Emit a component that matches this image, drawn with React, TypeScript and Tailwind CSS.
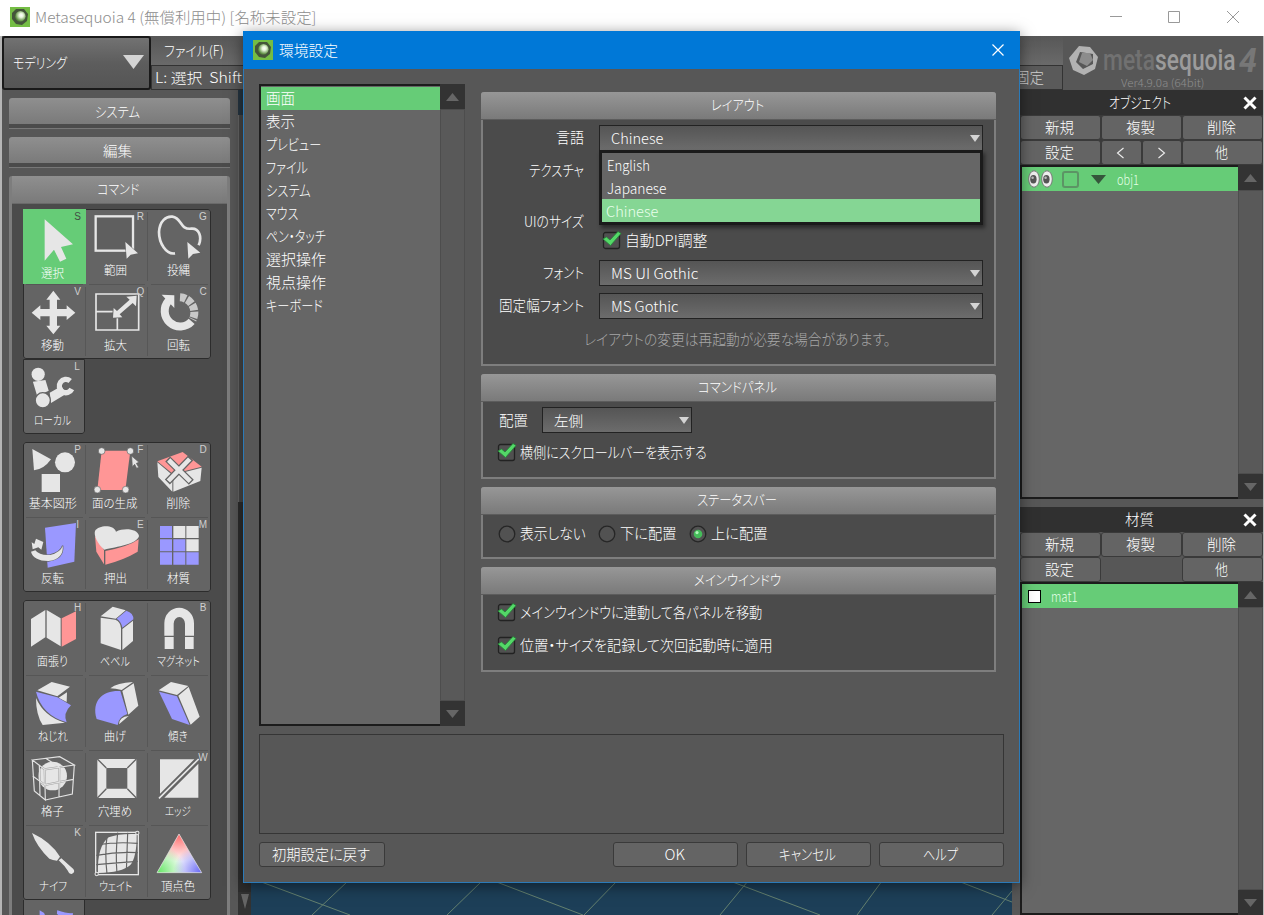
import React, { useLayoutEffect, useRef, useState } from 'react';

const L = '#e6e6e6';
const P = '#ff9696';
const V = '#9a98ff';

/** Text squeezed or stretched horizontally to a fixed advance width. */
function Fit({ w, children, className = '' }: { w: number; children: React.ReactNode; className?: string }) {
  const ref = useRef<HTMLSpanElement>(null);
  const [scale, setScale] = useState(1);
  useLayoutEffect(() => {
    if (ref.current) setScale(w / ref.current.offsetWidth);
  }, [w]);
  return (
    <span className={`inline-block shrink-0 whitespace-nowrap text-left ${className}`} style={{ width: w }}>
      <span ref={ref} className="inline-block origin-left whitespace-pre" style={{ transform: `scaleX(${scale})` }}>
        {children}
      </span>
    </span>
  );
}

function AppIcon() {
  return (
    <svg className="h-5 w-5 shrink-0" viewBox="0 0 20 20">
      <defs>
        <radialGradient id="glow" cx=".58" cy=".42" r=".55">
          <stop offset="0" stopColor="#fff" />
          <stop offset=".35" stopColor="#e8f6dc" />
          <stop offset="1" stopColor="#5d8f40" />
        </radialGradient>
      </defs>
      <rect width="20" height="20" fill="#74bd44" />
      <path d="M6 2 L14 2 L18 7 L17 14 L12 18 L6 17 L2 12 L2 6Z" fill="#44553a" />
      <circle cx="10.4" cy="9.2" r="5.2" fill="url(#glow)" />
    </svg>
  );
}

function Tri({ up = false, className = '' }: { up?: boolean; className?: string }) {
  return (
    <svg className={className} viewBox="0 0 12 8" preserveAspectRatio="none">
      <path d={up ? 'M6 0 L12 8 H0Z' : 'M0 0 H12 L6 8Z'} fill="currentColor" />
    </svg>
  );
}

function ScrollBar() {
  return (
    <div className="flex w-[25px] shrink-0 flex-col bg-[#595959]">
      <div className="flex h-[25px] items-center justify-center bg-[#333]">
        <Tri up className="h-[8px] w-[13px] text-[#666]" />
      </div>
      <div className="grow border border-[#4d4d4d] bg-[#595959]" />
      <div className="flex h-[25px] items-center justify-center bg-[#333]">
        <Tri className="h-[8px] w-[13px] text-[#666]" />
      </div>
    </div>
  );
}

type Tool = { label: string; w: number; k?: string; vb: string; icon: React.ReactNode; on?: boolean };

function ToolCell({ t, col, first }: { t: Tool; col: number; first: boolean }) {
  return (
    <div className={`relative h-[75px] ${t.on ? 'bg-[#66cc77]' : ''}`}>
      {!first && <div className="absolute left-[3px] right-[3px] top-0 h-px bg-[#565656]" />}
      {col < 2 && !t.on && <div className="absolute bottom-[3px] right-0 top-[3px] w-px bg-[#575757]" />}
      <svg className="absolute inset-0 h-full w-full" viewBox={t.vb} preserveAspectRatio="none">
        {t.icon}
      </svg>
      {t.k && (
        <span className={`absolute right-[3px] top-[2px] w-[10px] text-center font-['Liberation_Sans'] text-[10px] leading-[12px] ${t.on ? 'rounded-sm text-[#424b44]' : 'text-[#cfcfcf]'}`}>
          {t.k}
        </span>
      )}
      <div className={`absolute left-0 right-[3px] flex h-[14px] items-center justify-center text-[12px] leading-[14px] text-white ${t.on ? 'top-[57px]' : 'top-[54px]'}`}>
        <Fit w={t.w}>{t.label}</Fit>
      </div>
    </div>
  );
}

function ToolGroup({ tools, className = '' }: { tools: Tool[]; className?: string }) {
  return (
    <div className={`grid w-[188px] shrink-0 grid-cols-3 rounded-[3px] bg-[#646464] outline outline-1 -outline-offset-1 outline-[#2c2c2c] ${className}`}>
      {tools.map((t, i) => (
        <ToolCell key={t.label} t={t} col={i % 3} first={i < 3} />
      ))}
    </div>
  );
}

const G1: Tool[] = [
  { label: '選択', w: 23, k: 'S', vb: '69 27 188 225', on: true, icon: <path fill={L} d="M134 58 V182 L162 149 L180 185 L199 176 L183 141 L219 133Z" /> },
  {
    label: '範囲', w: 23, k: 'R', vb: '257 27 188 225',
    icon: (
      <>
        <rect x="286" y="49" width="112" height="103" fill="#5f5f5f" stroke={L} strokeWidth="7" />
        <path d="M375 126 L379 176 L391 164 L413 160Z" fill={L} stroke="#646464" strokeWidth="3" paintOrder="stroke" />
      </>
    ),
  },
  {
    label: '投縄', w: 23, k: 'G', vb: '445 27 188 225',
    icon: (
      <>
        <path d="M526 160 C500 165 478 130 478 96 C480 62 500 48 518 50 C548 54 540 90 575 86 C598 84 608 110 597 136" fill="none" stroke={L} strokeWidth="8" />
        <path d="M563 126 L566 176 L580 162 L602 158Z" fill={L} stroke="#646464" strokeWidth="3" paintOrder="stroke" />
      </>
    ),
  },
  {
    label: '移動', w: 23, k: 'V', vb: '69 252 188 225',
    icon: <path fill={L} d="M160 272 L181 299 H171 V327 H200 V316 L226 338 L200 360 V349 H171 V377 H181 L160 403 L139 377 H149 V349 H121 V360 L95 338 L121 316 V327 H149 V299 H139Z" />,
  },
  {
    label: '拡大', w: 23, k: 'Q', vb: '257 252 188 225',
    icon: (
      <>
        <path d="M287 282 H415 V390 H287Z M287 335 H351 V390" fill="none" stroke={L} strokeWidth="5" />
        <path d="M409 287 L407 319 L397 309 L358 343 L366 352 L338 353 L340 324 L350 333 L388 299 L378 290Z" fill={L} stroke="#646464" strokeWidth="5" paintOrder="stroke" />
      </>
    ),
  },
  {
    label: '回転', w: 23, k: 'C', vb: '445 252 188 225',
    icon: (
      <>
        <path d="M507 302 A46 46 0 1 0 576 364" fill="none" stroke={L} strokeWidth="24" />
        <path d="M486 284 L524 286 L524 324Z" fill={L} />
        <path d="M541 292 A46 46 0 0 1 579 359" fill="none" stroke="#c8c8c8" strokeWidth="24" strokeDasharray="18 4" />
      </>
    ),
  },
];

const LOCAL: Tool = {
  label: 'ローカル', w: 37, k: 'L', vb: '69 477 188 225',
  icon: (
    <>
      <path d="M99 545 L137 540 L147 572 L112 588Z M150 578 L186 558 L198 583 L154 609Z" fill={L} />
      <circle cx="115" cy="523" r="20" fill={L} />
      <circle cx="129" cy="601" r="23" fill={L} stroke="#646464" strokeWidth="4" />
      <path d="M212 543 A20 20 0 1 0 217 567" fill="none" stroke={L} strokeWidth="16" />
    </>
  ),
};

const G2: Tool[] = [
  { label: '基本図形', w: 48, k: 'P', vb: '69 21 188 225', icon: <g fill={L}><path d="M97 42 L153 73 Q132 103 102 106Z" /><circle cx="195" cy="82" r="30" /><path d="M125 117 H180 V171 H125Z" /></g> },
  {
    label: '面の生成', w: 46, k: 'F', vb: '257 21 188 225',
    icon: (
      <>
        <path d="M304 47 H390 L375 165 H291Z" fill={P} />
        <g fill={L} stroke="#646464" strokeWidth="2">
          <circle cx="304" cy="48" r="10" /><circle cx="390" cy="48" r="10" /><circle cx="291" cy="164" r="10" /><circle cx="376" cy="164" r="10" />
          <path d="M394 63 L396 95 L403 88 L409 100 L415 97 L408 85 L416 82Z" />
        </g>
      </>
    ),
  },
  {
    label: '削除', w: 24, k: 'D', vb: '445 21 188 225',
    icon: (
      <>
        <path d="M473 79 L549 51 L606 95 L520 117Z" fill={P} />
        <path d="M473 82 L518 120 V170 L476 126Z M521 120 L606 98 L602 138 L521 170Z" fill={L} />
        <path d="M504 72 L575 142 M573 69 L503 141" stroke="#646464" strokeWidth="21" />
        <path d="M507 75 L572 139 M570 72 L506 138" stroke={L} strokeWidth="14" />
      </>
    ),
  },
  {
    label: '反転', w: 23, k: 'I', vb: '69 246 188 225',
    icon: (
      <>
        <path d="M135 278 L228 264 L223 380 L143 398Z" fill={V} />
        <path d="M188 332 Q182 352 150 360 Q118 362 106 346 L93 350 Q100 377 145 378 Q192 372 188 332Z M98 343 L95 322 L103 327 L108 311 L130 321 L124 344 L115 337Z" fill={L} stroke="#646464" strokeWidth="4" paintOrder="stroke" />
      </>
    ),
  },
  {
    label: '押出', w: 23, k: 'E', vb: '257 246 188 225',
    icon: (
      <>
        <path d="M284 302 L311 345 V388 L288 350Z M315 348 Q385 335 415 313 L412 350 Q370 375 315 389Z" fill={P} />
        <path d="M312 344 C290 325 280 300 284 288 C295 270 340 268 347 290 C370 278 412 280 416 303 C410 328 350 335 312 344Z" fill={L} />
      </>
    ),
  },
  {
    label: '材質', w: 23, k: 'M', vb: '445 246 188 225',
    icon: (
      <>
        <path d="M481 273 H517 V309 H481Z M481 313 H517 V349 H481Z M521 313 H557 V349 H521Z M481 352 H517 V389 H481Z M521 352 H557 V389 H521Z M560 352 H597 V389 H560Z" fill={V} />
        <path d="M521 273 H557 V309 H521Z M560 273 H597 V309 H560Z M560 313 H597 V349 H560Z" fill={L} />
      </>
    ),
  },
];

const G3: Tool[] = [
  {
    label: '面張り', w: 31, k: 'H', vb: '69 495 188 225',
    icon: <><path d="M93 552 L136 525 V607 L93 635Z M140 525 L182 550 V634 L140 608Z" fill={L} /><path d="M185 550 L228 529 V612 L185 635Z" fill={P} /></>,
  },
  {
    label: 'ベベル', w: 30, vb: '257 495 188 225',
    icon: (
      <>
        <path d="M301 544 L337 515 L376 526 L346 551Z M301 548 L345 554 Q361 560 362 580 V645 L301 625Z M366 582 L398 557 V618 L366 645Z" fill={L} />
        <path d="M349 551 L378 527 Q400 534 399 553 L366 578 Q362 558 349 551Z" fill={V} />
      </>
    ),
  },
  {
    label: 'マグネット', w: 43, k: 'B', vb: '445 495 188 225',
    icon: <path d="M494 602 V565 A44 46 0 0 1 583 565 V602 H556 V566 A17 20 0 0 0 522 566 V602Z M495 606 H522 V642 H495Z M556 606 H582 V642 H556Z" fill={L} />,
  },
  {
    label: 'ねじれ', w: 30, vb: '69 15 188 225',
    icon: (
      <>
        <path d="M112 61 L155 36 L210 50 L172 79Z M176 83 L201 67 L200 96Z M108 84 Q108 135 128 165 L195 158 Q132 140 108 84Z" fill={L} />
        <path d="M108 65 L172 82 L213 106 Q188 130 200 157 Q125 135 108 65Z" fill={V} />
      </>
    ),
  },
  {
    label: '曲げ', w: 22, vb: '257 15 188 225',
    icon: (
      <>
        <path d="M330 55 Q350 38 398 36 L364 60 Q345 56 330 55Z M366 63 L400 40 L414 107 L384 134Z M356 163 Q357 140 385 138Z" fill={L} />
        <path d="M289 147 C272 90 310 60 360 63 L381 132 Q355 140 352 165Z" fill={V} />
      </>
    ),
  },
  {
    label: '傾き', w: 20, vb: '445 15 188 225',
    icon: (
      <>
        <path d="M477 61 L514 36 L566 48 L532 75Z M536 77 L567 51 L600 140 L573 164Z" fill={L} />
        <path d="M478 65 L532 79 L570 165 L517 147Z" fill={V} />
      </>
    ),
  },
  {
    label: '格子', w: 23, vb: '69 240 188 225',
    icon: (
      <>
        <circle cx="158" cy="318" r="43" fill={L} />
        <path d="M97 270 L134 298 L223 285 M134 298 L136 390 M98 318 L135 345 L220 328 M118 284 L120 378 M178 292 L177 381" fill="none" stroke="#646464" strokeWidth="6" opacity=".55" />
        <path d="M97 270 L179 260 L223 285 L134 298Z L103 363 L136 390 L134 298 M97 270 L103 363 M136 390 L217 372 L223 285 M98 318 L135 345 L220 328 M118 284 L120 378 M178 292 L177 381 M137 265 L178 291" fill="none" stroke="#e2e2e2" strokeWidth="3.5" />
      </>
    ),
  },
  {
    label: '穴埋め', w: 34, vb: '257 240 188 225',
    icon: (
      <>
        <path fillRule="evenodd" d="M291 267 H408 V384 H291Z M318 294 V356 H381 V294Z" fill={L} />
        <path d="M291 267 L318 294 M408 267 L381 294 M291 384 L318 356 M408 384 L381 356" stroke="#646464" strokeWidth="4" />
      </>
    ),
  },
  {
    label: 'エッジ', w: 26, k: 'W', vb: '445 240 188 225',
    icon: <><path d="M481 268 H584 L481 371Z M596 281 V383 H494Z" fill={L} /><path d="M478 385 L597 267" stroke={L} strokeWidth="5" /></>,
  },
  {
    label: 'ナイフ', w: 28, k: 'K', vb: '69 465 188 225',
    icon: <path d="M96 489 Q152 515 180 560 L171 572 Q158 571 148 566 Q110 530 96 489Z M176 571 L184 565 L220 597 Q227 607 215 612 Q207 612 204 603 Q195 588 176 571Z" fill={L} />,
  },
  {
    label: 'ウェイト', w: 33, vb: '257 465 188 225',
    icon: (
      <>
        <rect x="286" y="487" width="128" height="127" fill="none" stroke={L} strokeWidth="4" />
        <path d="M293 609 Q290 530 325 502 Q355 490 409 492 Q410 560 390 585 Q365 608 293 609Z" fill={L} />
        <path d="M320 500 Q313 550 320 612 M352 488 Q345 550 350 612 M382 488 Q380 550 378 606 M293 524 Q350 515 412 520 M288 556 Q350 545 412 548 M288 584 Q350 578 412 574" fill="none" stroke="#646464" strokeWidth="3.5" />
        <circle cx="411" cy="489" r="5" fill="#646464" stroke={L} strokeWidth="3" /><circle cx="289" cy="612" r="5" fill="#646464" stroke={L} strokeWidth="3" />
      </>
    ),
  },
  {
    label: '頂点色', w: 34, vb: '445 465 188 225',
    icon: (
      <>
        <defs>
          <radialGradient id="vr" gradientUnits="userSpaceOnUse" cx="538" cy="490" r="85"><stop offset="0" stopColor="#ff6464" /><stop offset="1" stopColor="#ff6464" stopOpacity="0" /></radialGradient>
          <radialGradient id="vg" gradientUnits="userSpaceOnUse" cx="472" cy="608" r="85"><stop offset="0" stopColor="#5fe65f" /><stop offset="1" stopColor="#5fe65f" stopOpacity="0" /></radialGradient>
          <radialGradient id="vb" gradientUnits="userSpaceOnUse" cx="606" cy="608" r="85"><stop offset="0" stopColor="#6464f5" /><stop offset="1" stopColor="#6464f5" stopOpacity="0" /></radialGradient>
        </defs>
        {['#fff', 'url(#vr)', 'url(#vg)', 'url(#vb)'].map((f) => <path key={f} d="M538 492 L606 608 H472Z" fill={f} />)}
        <path d="M538 492 L606 608 H472Z" fill="none" stroke="#ddd" strokeWidth="2" />
      </>
    ),
  },
];

function SideHeader({ children, w }: { children: string; w: number }) {
  return (
    <div className="mb-2 flex h-[31px] w-[221px] shrink-0 flex-col rounded-t-[3px] border-b border-[#777] bg-[#4b4b4b]">
      <div className="flex h-[26px] items-center justify-center rounded-t-[3px] bg-linear-to-b from-[#8f8f8f] to-[#7a7a7a] pb-px pr-1 text-[14px] leading-5 text-white"><Fit w={w}>{children}</Fit></div>
    </div>
  );
}

function LeftPanel() {
  return (
    <div className="flex h-full w-[249px] shrink-0">
      <div className="flex h-full w-[236px] flex-col overflow-hidden bg-[#575757] pl-[7px] pt-2">
        <SideHeader w={45}>システム</SideHeader>
        <SideHeader w={29}>編集</SideHeader>
        <div className="flex w-[221px] grow flex-col overflow-hidden rounded-t-[3px] border-x-[3px] border-[#7d7d7d] bg-[#4b4b4b]">
          <div className="-mx-[3px] flex h-[28px] shrink-0 items-center justify-center border-b border-[#6a6a6a] bg-linear-to-b from-[#8f8f8f] to-[#7a7a7a] pb-[3px] pr-1 text-[14px] leading-5 text-white"><Fit w={42}>コマンド</Fit></div>
          <div className="flex flex-col pl-[11px] pt-[5px]">
            <ToolGroup tools={G1} />
            <div className="mb-[8px] h-[75px] w-[62px] rounded-b-[3px] bg-[#646464] outline outline-1 -outline-offset-1 outline-[#2c2c2c]">
              <div className="h-px bg-[#5a5a5a]" />
              <div className="-mt-px"><ToolCell t={LOCAL} col={2} first /></div>
            </div>
            <ToolGroup tools={G2} className="mb-[8px]" />
            <ToolGroup tools={G3} />
            <div className="h-[75px] w-[62px] border-x border-[#2c2c2c] bg-[#646464]">
              <svg className="h-full w-full" viewBox="69 690 188 225"><path d="M118 717 L132 726 L140 745 H118Z M173 717 Q205 728 222 726 V745 H190 L172 728Z" fill={V} /></svg>
            </div>
          </div>
        </div>
      </div>
      <div className="flex w-[13px] flex-col">
        <div className="h-[25px] bg-[#263541]" />
        <div className="h-[387px] border-l border-[#666] bg-[#474747]" />
        <div className="grow bg-[#2d2d2d]" />
        <div className="flex h-[23px] items-center justify-center bg-[#333] pb-1"><Tri className="h-[15px] w-[8px] text-[#666]" /></div>
      </div>
    </div>
  );
}

function Btn({ children, w, className = '' }: { children: string; w: number; className?: string }) {
  return (
    <div className={`flex h-[25px] items-center justify-center rounded-[3px] border border-[#3a3a3a] bg-[#646464] pb-[2px] pr-[2px] text-[15px] leading-5 text-white ${className}`}>
      <Fit w={w}>{children}</Fit>
    </div>
  );
}

function PanelTitle({ children, w }: { children: string; w: number }) {
  return (
    <div className="flex h-[25px] shrink-0 items-center bg-[#303030] text-[15px] leading-5 text-white">
      <div className="flex grow justify-center pb-[2px] pl-[17px]"><Fit w={w}>{children}</Fit></div>
      <svg className="mr-[5px] h-4 w-4" viewBox="0 0 16 16"><path d="M2.5 2.5 L13.5 13.5 M13.5 2.5 L2.5 13.5" stroke="#fff" strokeWidth="3" /></svg>
    </div>
  );
}

function Eye() {
  return (
    <svg className="h-[18px] w-3" viewBox="0 0 12 18">
      <ellipse cx="6" cy="9" rx="5.3" ry="8.2" fill="#eee" stroke="#777" />
      <ellipse cx="5.4" cy="9.2" rx="3.2" ry="4.2" fill="#555" /><circle cx="4.6" cy="7.8" r="1.3" fill="#bbb" />
    </svg>
  );
}

function RightPanel() {
  return (
    <div className="flex h-full w-[243px] shrink-0 flex-col bg-[#575757]">
      <PanelTitle w={62}>オブジェクト</PanelTitle>
      <div className="grid shrink-0 grid-cols-3 bg-[#3a3a3a]">
        <Btn w={29}>新規</Btn><Btn w={29}>複製</Btn><Btn w={29}>削除</Btn>
        <Btn w={29}>設定</Btn>
        <div className="grid grid-cols-2">
          {['M8.5 2 L2.5 7 L8.5 12', 'M2.5 2 L8.5 7 L2.5 12'].map((d) => (
            <div key={d} className="flex h-[25px] items-center justify-center rounded-[3px] border border-[#3a3a3a] bg-[#646464] pr-px">
              <svg className="h-[14px] w-[11px]" viewBox="0 0 11 14"><path d={d} fill="none" stroke="#eee" strokeWidth="1.1" /></svg>
            </div>
          ))}
        </div>
        <Btn w={13}>他</Btn>
      </div>
      <div className="mb-2 flex h-[334px] shrink-0">
        <div className="grow border-y-2 border-l-2 border-[#1c1c1c] bg-[#666]">
          <div className="flex h-[24px] items-center bg-[#66cc77] pl-[6px]">
            <Eye /><span className="w-px" /><Eye />
            <div className="ml-[9px] h-[17px] w-[17px] rounded-[3px] border-2 border-[#5c9465]" />
            <Tri className="ml-[12px] h-[9px] w-[15px] text-[#35563b]" />
            <span className="ml-[11px] text-[14px] leading-5 text-[#e3ffe6]"><Fit w={22}>obj1</Fit></span>
          </div>
        </div>
        <ScrollBar />
      </div>
      <PanelTitle w={29}>材質</PanelTitle>
      <div className="grid shrink-0 grid-cols-3">
        <Btn w={29}>新規</Btn><Btn w={29}>複製</Btn><Btn w={29}>削除</Btn>
        <Btn w={29}>設定</Btn><div /><Btn w={13}>他</Btn>
      </div>
      <div className="flex grow">
        <div className="grow border-b-2 border-l-2 border-t-2 border-[#1c1c1c] bg-[#666]">
          <div className="flex h-[24px] items-center bg-[#66cc77] pl-[6px]">
            <div className="h-[13px] w-[13px] border-[1.5px] border-black bg-white" />
            <span className="ml-[10px] text-[14px] leading-5 text-[#e3ffe6]"><Fit w={27}>mat1</Fit></span>
          </div>
        </div>
        <ScrollBar />
      </div>
    </div>
  );
}

function TopBar() {
  return (
    <div className="flex h-[54px] shrink-0 bg-[#575757] text-[15px] leading-5 text-white">
      <div className="flex w-[149px] items-center justify-between rounded-[3px] border-2 border-[#191919] bg-linear-to-b from-[#727272] via-[#5d5d5d] to-[#555] pb-[2px] pl-[9px] pr-[5px]">
        <Fit w={54} className="text-[14px]">モデリング</Fit>
        <Tri className="h-[14px] w-[21px] text-[#d4d4d4]" />
      </div>
      <div className="flex w-[912px] flex-col">
        <div className="flex h-[29px] items-center bg-linear-to-b from-[#575757] to-[#6a6a6a] pb-px pl-[13px] text-[14px]"><Fit w={60}>ファイル(F)</Fit></div>
        <div className="flex h-[25px] items-center justify-between border border-[#333] bg-[#5a5a5a] pb-[2px] pl-[3px] pr-[18px]">
          <Fit w={87} className="text-[14px]">L: 選択  Shift</Fit>
          <Fit w={29} className="text-[#d0d0d0]">固定</Fit>
        </div>
      </div>
      <div className="flex grow flex-col pl-[5px] pt-[9px]">
        <div className="flex h-[30px] items-center">
          <svg className="h-[30px] w-[32px]" viewBox="0 0 32 30">
            <path fillRule="evenodd" d="M11 1 L22 2 L30 12 L27 24 L16 30 L5 25 L1 13Z M12 7 L8 17 L15 24 L25 19 L25 9Z" fill="#b2b2b2" />
            <path d="M14 8 L22 8 L25 15 L19 21 L11 17Z" fill="#8c8c8c" />
          </svg>
          <Fit w={133} className="ml-[3px] font-['Roboto'] text-[29px] font-medium leading-[28px] text-[#9b9b9b]"><span className="text-[#717171]">meta</span>sequoia</Fit>
          <Fit w={18} className="ml-[3px] font-['Roboto'] text-[34px] font-bold italic leading-[30px] text-[#777]">4</Fit>
        </div>
        <span className="pl-[53px] text-[11px] leading-[14px] text-[#8e8e8e]"><Fit w={83}>Ver4.9.0a (64bit)</Fit></span>
      </div>
    </div>
  );
}

function Select({ text, tw, w, className = '' }: { text: string; tw: number; w: string; className?: string }) {
  return (
    <div className={`flex h-[26px] shrink-0 items-center justify-between border border-[#222] bg-linear-to-b from-[#555] to-[#6c6c6c] pl-[11px] pr-[2px] text-[14px] leading-5 text-white ${w} ${className}`}>
      <Fit w={tw}>{text}</Fit>
      <Tri className="h-[7px] w-[10px] text-[#d4d4d4]" />
    </div>
  );
}

function Check({ text, w }: { text: string; w: number }) {
  return (
    <div className="flex h-[20px] items-center text-[15px] leading-5 text-white">
      <svg className="mr-[3px] h-[20px] w-[20px] shrink-0" viewBox="0 0 20 20">
        <rect x="1.5" y="2.5" width="16" height="16" rx="2" fill="#505050" stroke="#222" strokeWidth="1.3" />
        <path d="M1 9 L4.5 7 L8 10 L16 1.5 L19 3.5 L8.5 15.5Z" fill="#54d868" stroke="#268538" strokeWidth=".8" />
      </svg>
      <Fit w={w}>{text}</Fit>
    </div>
  );
}

function Radio({ text, w, on = false, gap = '' }: { text: string; w: number; on?: boolean; gap?: string }) {
  return (
    <div className={`flex items-center ${gap}`}>
      <svg className="mr-[5px] h-[18px] w-[18px] shrink-0" viewBox="0 0 18 18">
        <circle cx="9" cy="9" r="7.8" fill="#525252" stroke="#262626" strokeWidth="1.3" />
        {on && <><circle cx="9" cy="9" r="4.3" fill="#45bd5a" /><circle cx="8" cy="7.6" r="1.6" fill="#adf5b8" /></>}
      </svg>
      <Fit w={w} className="-ml-px pb-px">{text}</Fit>
    </div>
  );
}

function Group({ title, w, h, children }: { title: string; w: number; h: string; children: React.ReactNode }) {
  return (
    <section className={`mb-2 flex w-[515px] shrink-0 flex-col rounded-t-[3px] border-2 border-t-0 border-[#7e7e7e] bg-[#4b4b4b] ${h}`}>
      <div className="-mx-[2px] flex h-[28px] shrink-0 items-center justify-center rounded-t-[3px] border-b border-[#5c5c5c] bg-linear-to-b from-[#979797] to-[#7a7a7a] pb-[4px] pr-[3px] text-[14px] leading-5 text-white"><Fit w={w}>{title}</Fit></div>
      {children}
    </section>
  );
}

function Row({ label, w, children, className }: { label: string; w: number; children?: React.ReactNode; className: string }) {
  return (
    <div className={`flex h-[26px] items-center text-[15px] leading-5 text-white ${className}`}>
      <div className="mr-[15px] flex w-[101px] justify-end pb-[2px]"><Fit w={w}>{label}</Fit></div>
      {children}
    </div>
  );
}

const PAGES: [string, number][] = [
  ['画面', 29], ['表示', 29], ['プレビュー', 55], ['ファイル', 42], ['システム', 45], ['マウス', 32], ['ペン・タッチ', 60], ['選択操作', 60], ['視点操作', 60], ['キーボード', 57],
];

function Dialog() {
  return (
    <div className="absolute left-[243px] top-[31px] flex h-[852px] w-[777px] flex-col border border-[#2b7ab8] bg-[#575757] shadow-[0_3px_14px_rgba(0,0,0,0.5)]">
      <div className="-mx-px -mt-px flex h-[38px] shrink-0 items-center bg-[#0078d7] pl-[10px] pr-[16px] text-white">
        <AppIcon />
        <Fit w={59} className="ml-[6px] pb-px text-[15px] leading-5">環境設定</Fit>
        <svg className="ml-auto h-3 w-3" viewBox="0 0 12 12"><path d="M.5 .5 L11.5 11.5 M11.5 .5 L.5 11.5" stroke="#fff" strokeWidth="1.2" /></svg>
      </div>
      <div className="flex h-[657px] shrink-0 pl-[15px] pt-[15px]">
        <div className="flex h-[642px] w-[206px] shrink-0">
          <div className="grow border-y-2 border-l-2 border-[#1c1c1c] bg-[#666] pt-px">
            {PAGES.map(([p, w], i) => (
              <div key={p} className={`flex h-[23px] items-center pb-[2px] pl-[5px] text-[15px] leading-5 text-white ${i === 0 ? 'bg-[#66cc77]' : ''}`}><Fit w={w}>{p}</Fit></div>
            ))}
          </div>
          <ScrollBar />
        </div>
        <div className="ml-4 flex flex-col pt-[8px]">
          <Group title="レイアウト" w={53} h="h-[274px]">
            <Row label="言語" w={28} className="mt-[5px]">
              <div className="relative">
                <Select text="Chinese" tw={52} w="w-[384px]" />
                <div className="absolute left-0 top-[25px] w-[384px] border-[3px] border-[#1b1b1b] bg-[#666] text-[14px] leading-5 shadow-[2px_3px_4px_rgba(0,0,0,0.45)]">
                  <div className="flex h-[23px] items-center pl-[5px]"><Fit w={43}>English</Fit></div>
                  <div className="flex h-[23px] items-center pl-[5px]"><Fit w={59}>Japanese</Fit></div>
                  <div className="flex h-[23px] items-center bg-[#85d694] pl-[4px] text-[#e9ffec]"><Fit w={52}>Chinese</Fit></div>
                </div>
              </div>
            </Row>
            <Row label="テクスチャ" w={55} className="mt-[7px]" />
            <Row label="UIのサイズ" w={60} className="mt-[25px]" />
            <div className="-mt-[5px] pl-[119px]"><Check text="自動DPI調整" w={82} /></div>
            <Row label="フォント" w={41} className="mt-[10px]"><Select text="MS UI Gothic" tw={87} w="w-[384px]" /></Row>
            <Row label="固定幅フォント" w={85} className="mt-[7px]"><Select text="MS Gothic" tw={68} w="w-[384px]" /></Row>
            <div className="mt-[10px] flex justify-center pr-[3px] text-[15px] leading-5 text-[#a6a6a6]"><Fit w={306}>レイアウトの変更は再起動が必要な場合があります。</Fit></div>
          </Group>
          <Group title="コマンドパネル" w={79} h="h-[105px]">
            <div className="mt-[5px] flex items-center pl-[16px] text-[15px] leading-5 text-white"><Fit w={29} className="pb-px">配置</Fit><Select text="左側" tw={29} w="w-[150px]" className="ml-[14px]" /></div>
            <div className="mt-[9px] pl-[14px]"><Check text="横側にスクロールバーを表示する" w={187} /></div>
          </Group>
          <Group title="ステータスバー" w={80} h="h-[72px]">
            <div className="mt-[8px] flex pl-[15px] text-[15px] leading-5 text-white">
              <Radio text="表示しない" w={66} />
              <Radio text="下に配置" w={56} gap="ml-[12px]" />
              <Radio text="上に配置" w={56} gap="ml-[13px]" on />
            </div>
          </Group>
          <Group title="メインウインドウ" w={87} h="h-[105px]">
            <div className="mt-[7px] flex flex-col gap-[13px] pl-[14px]">
              <Check text="メインウィンドウに連動して各パネルを移動" w={242} />
              <Check text="位置・サイズを記録して次回起動時に適用" w={253} />
            </div>
          </Group>
        </div>
      </div>
      <div className="ml-[15px] mt-[8px] h-[100px] w-[745px] shrink-0 border border-[#353535]" />
      <div className="ml-[15px] mt-[8px] flex w-[745px] gap-2">
        <Btn w={98} className="mr-auto w-[126px]">初期設定に戻す</Btn>
        <Btn w={20} className="w-[125px]">OK</Btn>
        <Btn w={57} className="w-[125px]">キャンセル</Btn>
        <Btn w={35} className="w-[125px]">ヘルプ</Btn>
      </div>
    </div>
  );
}

export default function App() {
  return (
    <div className="relative flex h-[915px] w-[1264px] flex-col overflow-hidden bg-white font-['Noto_Sans_CJK_JP',sans-serif] font-light [font-feature-settings:'palt']">
      <div className="flex h-9 shrink-0 items-center pb-[2px] pl-[10px] pr-[25px]">
        <AppIcon />
        <Fit w={281} className="ml-[5px] text-[15px] leading-5 text-[#8d8d8d]">Metasequoia 4 (無償利用中) [名称未設定]</Fit>
        <svg className="ml-auto h-[14px] w-[130px]" viewBox="0 0 130 14" fill="none" stroke="#999">
          <path d="M1 6.5 H13 M59.5 1.5 H70.5 V12.5 H59.5Z M118 1 L130 13 M130 1 L118 13" />
        </svg>
      </div>
      <div className="flex h-[879px] flex-col border-l-2 border-r border-l-[#b5b5b5] border-r-[#bbb]">
        <TopBar />
        <div className="flex h-[825px]">
          <LeftPanel />
          <svg className="h-full w-[761px] shrink-0 bg-[#1d3f58]" viewBox="251 90 761 825">
            <path d="M256 880 L350 915 M348 881 L312 915 M482 881 L447 915 M494 881 L583 915 M617 881 L584 915 M730 881 L820 915 M748 881 L720 915 M882 881 L857 915 M958 881 L1012 902 M1012 891 L992 915" stroke="#64806f" strokeWidth="1" fill="none" />
          </svg>
          <div className="w-[8px] shrink-0 bg-[#575757]" />
          <RightPanel />
        </div>
      </div>
      <Dialog />
    </div>
  );
}
